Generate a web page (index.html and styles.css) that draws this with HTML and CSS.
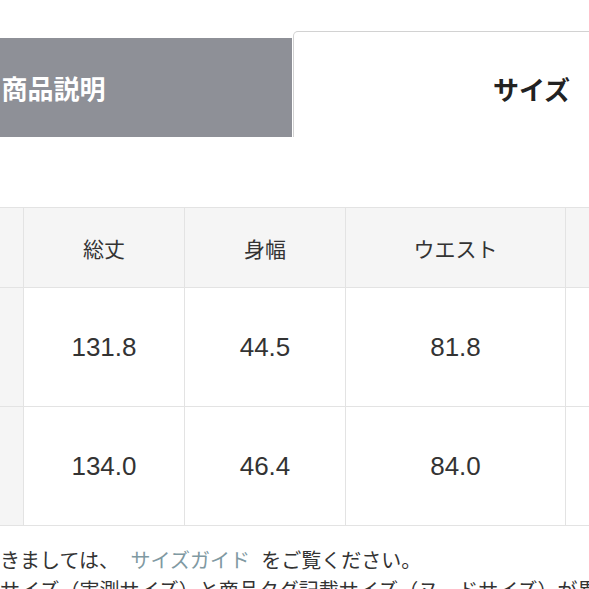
FILE: index.html
```html
<!DOCTYPE html>
<html lang="ja">
<head>
<meta charset="utf-8">
<link rel="stylesheet" href="styles.css">
</head>
<body>
<div class="wrap">
  <div class="tabs">
    <div class="tab tab-off">商品説明</div>
    <div class="tab tab-on">サイズ</div>
  </div>
  <table class="size">
    <colgroup>
      <col class="c0"><col class="c1"><col class="c2"><col class="c3"><col class="c4">
    </colgroup>
    <tr class="head">
      <th></th><th>総丈</th><th>身幅</th><th>ウエスト</th><th></th>
    </tr>
    <tr class="row">
      <th></th><td>131.8</td><td>44.5</td><td>81.8</td><td></td>
    </tr>
    <tr class="row">
      <th></th><td>134.0</td><td>46.4</td><td>84.0</td><td></td>
    </tr>
  </table>
</div>
<div class="note">
  <p class="line">きましては、 <a class="guide">サイズガイド</a> をご覧ください。</p>
  <p class="line">サイズ（実測サイズ）と商品タグ記載サイズ（ヌードサイズ）が異なる場合があります。</p>
</div>
</body>
</html>
```

FILE: styles.css
```css
html, body {
  margin: 0;
  padding: 0;
  background: #ffffff;
  overflow: hidden;
}
body {
  font-family: "Liberation Sans", "Noto Sans CJK JP", sans-serif;
  color: #333333;
}
.wrap {
  margin-left: -185px;
  width: 1000px;
}
.tabs {
  display: flex;
  align-items: flex-end;
  gap: 1px;
  padding-top: 31px;
}
.tab {
  width: 477px;
  box-sizing: border-box;
  display: flex;
  align-items: center;
  justify-content: center;
  font-family: "Noto Sans CJK JP", sans-serif;
  font-weight: 700;
  font-size: 26px;
}
.tab-off {
  height: 99px;
  background: #8e9097;
  color: #ffffff;
}
.tab-on {
  height: 106px;
  padding-top: 8px;
  background: #ffffff;
  color: #222222;
  border: 1px solid #d2d2d2;
  border-bottom: none;
  border-top-left-radius: 5px;
  border-top-right-radius: 5px;
}
.size {
  margin-top: 70px;
  border-collapse: collapse;
  table-layout: fixed;
  width: 900px;
}
.c0 { width: 208px; }
.c1 { width: 161px; }
.c2 { width: 161px; }
.c3 { width: 220px; }
.c4 { width: 150px; }
.size th, .size td {
  border: 1px solid #e3e3e3;
  text-align: center;
  padding: 0;
}
.size th {
  background: #f5f5f5;
  font-family: "Noto Sans CJK JP", sans-serif;
  font-weight: 400;
  font-size: 21px;
  color: #333333;
}
.size td {
  background: #ffffff;
  font-family: "Liberation Sans", sans-serif;
  font-size: 26px;
  color: #333333;
}
.head { height: 80px; }
.row { height: 119px; }
.note {
  margin-top: 19px;
  font-family: "Noto Sans CJK JP", sans-serif;
  font-size: 20px;
  color: #333333;
  white-space: nowrap;
}
.line {
  margin: 0;
  line-height: 30px;
}
.guide {
  color: #7f99a2;
  margin: 0 7px;
}
```
